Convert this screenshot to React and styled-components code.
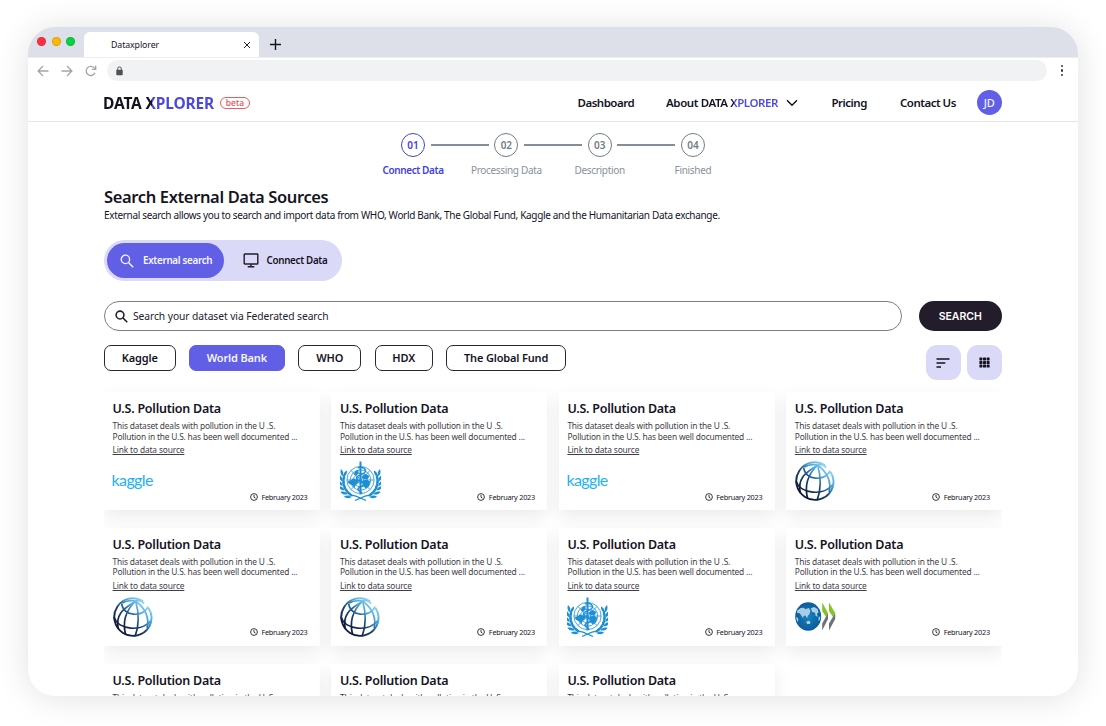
import React from 'react';
import styled, { createGlobalStyle, css } from 'styled-components';

const GlobalStyle = createGlobalStyle`
  * { box-sizing: border-box; }
  body {
    margin: 0;
    background: #fff;
    color: #15131f;
    font-family: "Noto Sans", "Open Sans", sans-serif;
    overflow: hidden;
  }
  button { font-family: inherit; margin: 0; padding: 0; border: 0; background: none; color: inherit; }
  svg { display: block; flex: none; }
`;

const Page = styled.div`
  height: 726px;
  padding: 27px 28px 30px;
`;

const Window = styled.div`
  display: flex;
  flex-direction: column;
  height: 669px;
  border-radius: 27px;
  overflow: hidden;
  background: #fff;
  box-shadow: 0 2px 34px rgba(0, 0, 0, 0.12);
`;

const TabBar = styled.div`
  display: flex;
  height: 30px;
  flex: none;
  padding: 5px 0 0 9px;
  background: #dde0e8;
`;

const Lights = styled.div`
  display: flex;
  gap: 5.6px;
  width: 47px;
  padding-top: 5px;
`;

const Light = styled.span`
  width: 9px;
  height: 9px;
  border-radius: 50%;
  background: ${(p) => p.$color};
  border: 0.5px solid rgba(0, 0, 0, 0.12);
`;

const Tab = styled.div`
  display: flex;
  align-items: center;
  justify-content: space-between;
  width: 175px;
  height: 25px;
  padding: 0 8px 0 27px;
  border-radius: 6px 6px 0 0;
  background: #fff;
  font-size: 8.8px;
  letter-spacing: -0.1px;
`;

const NewTab = styled.div`
  padding: 7px 0 0 11px;
`;

const AddressRow = styled.div`
  display: flex;
  align-items: center;
  height: 28px;
  flex: none;
  padding: 0 12.5px 2px 8.5px;
  color: #a4a5a9;
  border-top: 1px solid #eceef3;
`;

const NavIcons = styled.div`
  display: flex;
  gap: 12px;
  width: 70.5px;
`;

const Address = styled.div`
  display: flex;
  align-items: center;
  width: 940px;
  height: 21px;
  padding-left: 8px;
  border-radius: 11px;
  background: #f1f2f4;
`;

const Dots = styled.div`
  display: flex;
  flex-direction: column;
  gap: 2px;
  margin-left: 13.5px;
  span { width: 2.2px; height: 2.2px; border-radius: 50%; background: #35353b; }
`;

const Header = styled.header`
  display: flex;
  align-items: center;
  height: 37px;
  flex: none;
  padding: 0 76px 1px 75px;
  border-bottom: 1px solid #e4e4f2;
`;

const Brand = styled.span`
  color: transparent;
  background: linear-gradient(90deg, #15131f ${(p) => p.$split}px, #4b48e0 ${(p) => p.$split}px);
  -webkit-background-clip: text;
  background-clip: text;
`;

const Logo = styled.div`
  width: 117px;
  font-size: 15.5px;
  font-weight: 700;
  line-height: 20px;
  letter-spacing: -0.15px;
  white-space: nowrap;
`;

const Beta = styled.span`
  width: 30px;
  height: 12px;
  border: 1px solid #ee5a5f;
  border-radius: 6px;
  color: #ee4a50;
  font-size: 8.5px;
  font-weight: 500;
  line-height: 9px;
  letter-spacing: 0.1px;
  text-align: center;
`;

const Menu = styled.nav`
  display: flex;
  align-items: center;
  margin-left: auto;
  font-size: 11.5px;
  font-weight: 600;
  letter-spacing: -0.5px;
  white-space: nowrap;
`;

const MenuItem = styled.span`
  display: flex;
  align-items: center;
  width: ${(p) => p.$width}px;
  letter-spacing: ${(p) => (p.$wide ? -0.4 : -0.5)}px;
  svg { margin-left: 7.5px; }
`;

const Avatar = styled.span`
  width: 25.5px;
  height: 25.5px;
  border-radius: 50%;
  background: #605fe6;
  color: #f4f4ff;
  font-size: 11px;
  font-weight: 500;
  line-height: 25.5px;
  letter-spacing: 0;
  text-align: center;
`;

const Content = styled.main`
  display: flex;
  flex-direction: column;
  flex: 1;
  min-height: 0;
  padding: 0 76px;
`;

const Stepper = styled.ol`
  display: flex;
  justify-content: center;
  margin: 11px 0 0;
  padding: 0;
  list-style: none;
`;

const Step = styled.li`
  display: flex;
  flex-direction: column;
  align-items: center;
  width: 93.3px;
  color: ${(p) => (p.$active ? '#4340e0' : '#89919a')};
  font-size: 10px;
  font-weight: ${(p) => (p.$active ? 600 : 400)};
  line-height: 14px;
  letter-spacing: ${(p) => (p.$active ? -0.4 : -0.32)}px;
  white-space: nowrap;
`;

const StepTrack = styled.div`
  display: flex;
  align-items: center;
  align-self: stretch;
  margin-bottom: 6px;
`;

const StepLine = styled.span`
  flex: 1;
  height: 1.5px;
  background: ${(p) => (p.$hidden ? 'transparent' : '#858d97')};
  &:first-child { margin-right: 5.5px; }
  &:last-child { margin-left: 5.5px; }
`;

const StepNumber = styled.span`
  width: 24px;
  height: 24px;
  border: 1.5px solid ${(p) => (p.$active ? '#4340e0' : '#737c87')};
  border-radius: 50%;
  color: ${(p) => (p.$active ? '#4340e0' : '#737c87')};
  font-size: 10px;
  font-weight: 600;
  line-height: 22px;
  letter-spacing: 0;
  text-align: center;
`;

const Title = styled.h1`
  margin: 10px 0 0;
  font-size: 16.5px;
  font-weight: 600;
  line-height: 20px;
  letter-spacing: -0.36px;
`;

const Subtitle = styled.p`
  margin: 0;
  font-size: 10px;
  line-height: 16px;
  letter-spacing: -0.335px;
  white-space: nowrap;
`;

const Toggle = styled.div`
  display: flex;
  width: 238px;
  height: 41px;
  margin-top: 17px;
  padding: 3px;
  border-radius: 21px;
  background: #dbd9f8;
`;

const ToggleItem = styled.button`
  display: flex;
  align-items: center;
  gap: ${(p) => (p.$active ? 9 : 8)}px;
  width: ${(p) => (p.$active ? 117 : 115)}px;
  height: 35px;
  padding-left: ${(p) => (p.$active ? 13 : 18.5)}px;
  border-radius: 18px;
  font-size: 9.8px;
  font-weight: 600;
  letter-spacing: -0.3px;
  white-space: nowrap;
  span { padding-bottom: 1px; }
  ${(p) => p.$active && css`background: #605fe6; color: #f6f6ff;`}
`;

const SearchRow = styled.div`
  display: flex;
  gap: 17px;
  margin-top: 20px;
`;

const SearchField = styled.div`
  display: flex;
  align-items: center;
  gap: 5px;
  width: 798px;
  height: 30px;
  padding-left: 10px;
  border: 1px solid #7d7d82;
  border-radius: 15px;
  color: #24222e;
  font-size: 10.3px;
  letter-spacing: -0.08px;
`;

const SearchButton = styled.button`
  width: 82.5px;
  height: 30px;
  border-radius: 15px;
  background: #231c2b;
  color: #fff;
  font: 600 10.5px Inter, sans-serif;
`;

const FilterRow = styled.div`
  display: flex;
  gap: 13.4px;
  margin-top: 14px;
`;

const Chip = styled.button`
  width: ${(p) => p.$width}px;
  height: 26px;
  padding-bottom: 1.5px;
  border: 1.2px solid ${(p) => (p.$active ? '#605fe6' : '#2b2836')};
  border-radius: 7px;
  background: ${(p) => (p.$active ? '#605fe6' : '#fff')};
  color: ${(p) => (p.$active ? '#f6f6ff' : '#15131f')};
  font-size: 11px;
  font-weight: 600;
  letter-spacing: -0.16px;
`;

const ViewButtons = styled.div`
  display: flex;
  gap: 6px;
  margin: 0 0.5px 0 auto;
`;

const ViewButton = styled.button`
  display: grid;
  place-items: center;
  width: 35px;
  height: 35px;
  border-radius: 11px;
  background: #dbd9f8;
`;

const CardGrid = styled.div`
  display: grid;
  grid-template-columns: repeat(4, 216px);
  grid-auto-rows: 118px;
  gap: 17.8px 11.45px;
  flex: 1;
  min-height: 0;
  overflow: hidden;
  padding-top: 12px;
`;

const Card = styled.article`
  display: flex;
  flex-direction: column;
  padding: 7px 12.5px 0 8.5px;
  background: #fff;
  box-shadow: 0 7px 17px rgba(0, 0, 0, 0.08);
`;

const CardTitle = styled.h2`
  margin: 0;
  font-size: 12.5px;
  font-weight: 600;
  line-height: 20px;
  letter-spacing: -0.24px;
`;

const CardText = styled.p`
  margin: 2px 0 0;
  color: #3f3e49;
  font-size: 8.4px;
  line-height: 10.5px;
  letter-spacing: -0.18px;
  white-space: nowrap;
`;

const CardLink = styled.a`
  margin-top: 2px;
  color: #3f3e49;
  font-size: 8.4px;
  line-height: 12px;
  letter-spacing: -0.15px;
  text-decoration: underline;
`;

const CardFooter = styled.div`
  display: flex;
  justify-content: space-between;
  margin-top: 4px;
`;

const LogoSlot = styled.div`
  display: flex;
  align-items: center;
  height: 43px;
`;

const KaggleText = styled.span`
  margin-left: -1px;
  padding-bottom: 5px;
  color: #20b2f5;
  font: 400 16px Lato, sans-serif;
  letter-spacing: -0.6px;
`;

const CardDate = styled.span`
  display: flex;
  align-items: center;
  gap: 3.5px;
  height: 10px;
  margin-top: 31.5px;
  font-size: 7.3px;
  letter-spacing: -0.25px;
  white-space: nowrap;
`;

const SearchIcon = ({ size, stroke }) => (
  <svg width={size} height={size} viewBox="0 0 14 14" fill="none" stroke="currentColor" strokeWidth={stroke}>
    <circle cx="5.4" cy="5.4" r="4.2" />
    <path d="M8.5 8.5l4.7 4.7" />
  </svg>
);

const BackIcon = () => (
  <svg width="12" height="12" viewBox="0 0 12 12" fill="none" stroke="currentColor" strokeWidth="1.3">
    <path d="M11.5 6H1.2M6 1L1.1 6L6 11" />
  </svg>
);

const ForwardIcon = () => (
  <svg width="12" height="12" viewBox="0 0 12 12" fill="none" stroke="currentColor" strokeWidth="1.3">
    <path d="M.5 6h10.3M6 1l4.9 5L6 11" />
  </svg>
);

const ReloadIcon = () => (
  <svg width="12" height="12" viewBox="0 0 12 12" fill="none" stroke="currentColor" strokeWidth="1.3">
    <path d="M10 7.8A4.6 4.6 0 1 1 9.3 2.9L10.4 4" />
    <path d="M10.7 .6v3.8H6.8" />
  </svg>
);

const LockIcon = () => (
  <svg width="9" height="10" viewBox="0 0 9 10">
    <rect x="1.3" y="3.7" width="6.4" height="5.6" rx=".8" fill="#505156" />
    <path d="M2.7 4V2.7a1.8 1.8 0 0 1 3.6 0V4" fill="none" stroke="#505156" strokeWidth="1" />
  </svg>
);

const MonitorIcon = () => (
  <svg width="16" height="15" viewBox="0 0 16 15" fill="none" stroke="#231c2b" strokeWidth="1.4">
    <rect x="1.2" y="1" width="13.6" height="10" rx=".6" />
    <path d="M8 11v2.8M4.7 13.8h6.6" />
  </svg>
);

const ClockIcon = () => (
  <svg width="8" height="8" viewBox="0 0 8 8" fill="none" stroke="#24222e" strokeWidth=".9">
    <circle cx="4" cy="4" r="3.4" />
    <path d="M4 1.9V4.2L5.5 5.2" />
  </svg>
);

const WorldBankLogo = () => (
  <svg width="41" height="41" viewBox="0.8 0 41 41" fill="none" stroke="url(#wb)" strokeWidth="1.7">
    <defs>
      <linearGradient id="wb" gradientUnits="userSpaceOnUse" x1="10" y1="32" x2="33" y2="7">
        <stop offset="0" stopColor="#101a3c" />
        <stop offset=".4" stopColor="#1c4670" />
        <stop offset=".72" stopColor="#48a6db" />
        <stop offset="1" stopColor="#8fd0f3" />
      </linearGradient>
    </defs>
    <path d="M31 4.2A18.8 18.8 0 1 0 36.8 30" strokeWidth="1.9" />
    <path d="M36.4 11A18.8 18.8 0 0 1 36.8 30" strokeWidth="2" />
    <path d="M23.5 4C16 10 2.5 14 6 32" />
    <path d="M23.5 4C15 12 9.5 23 13.5 38" />
    <path d="M23.5 4C26 13 27.5 27 23 39" />
    <path d="M23.5 4C30 9 38 17 35 31" />
    <path d="M23.5 4C18 3 13 4 10 6M23.5 4C26 3 29.5 3.8 32 6.5" />
    <path d="M9.5 6.5C10.5 19.5 31 21 36 9.5" />
    <path d="M1.8 20C6 33.5 30 35 38.6 23.5" />
  </svg>
);

const leafAngles = [0, 1, 2, 3, 4, 5];

const WhoLeaves = () =>
  leafAngles.map((i) => (
    <g key={i} transform={`rotate(${-i * 15} 20.5 20)`}>
      <path d="M2.6 15.5C.4 13.5 0 10.4 1 8C3.4 10 3.9 13 2.6 15.5z" />
      <path d="M3.2 16.3C2.9 13 4.6 10.6 7 9.6C7.4 12.4 5.9 15.2 3.2 16.3z" />
    </g>
  ));

const WhoLogo = () => (
  <svg width="41" height="41" viewBox="0 0 41 41" fill="none" stroke="#1d8fd3">
    <g strokeWidth=".8">
      <circle cx="20.5" cy="19" r="13.6" />
      <circle cx="20.5" cy="19" r="10.2" />
      <circle cx="20.5" cy="19" r="6.8" />
      <circle cx="20.5" cy="19" r="3.3" />
      <path d="M7 19h27M11 9.5l19 19M30 9.5l-19 19" />
    </g>
    <g fill="#1d8fd3" stroke="none">
      <path d="M7.5 20.5l4-1.5 1.5-2 2.5 1.6 3 .4-1 3.4-2 1.1-.7 3.4-2.6-2.6-3.2-1.6z" />
      <path d="M22 15l3.5-2 3.7 1.8-1 3-3.1.4-2.7-1z" />
      <path d="M22.5 19.7l4-1.2 3.7 2-1.3 4.8-3.4 2.2-2.6-2.9z" />
      <path d="M14.8 10.5l3.4-1.8.5 3-2.2 2.9-2.6-.7z" />
    </g>
    <path d="M20.5 .5v33" strokeWidth="2" />
    <path d="M18 7C21.5 4.8 27.5 8 24.8 11.4C22.5 14 16.2 13.8 16.5 17.4C16.8 20.7 24.2 20 23.6 23.4C23.2 26 17.8 25.6 18 28.5C18.2 30.7 22.4 30.4 21.7 33" strokeWidth="1.5" />
    <path d="M4 14C1 24 6 34 16 35.2L26 39.5M37 14C40 24 35 34 25 35.2L15 39.5" strokeWidth="1.3" />
    <g fill="#1d8fd3" stroke="none">
      <WhoLeaves />
      <g transform="translate(41 0) scale(-1 1)">
        <WhoLeaves />
      </g>
    </g>
  </svg>
);

const OecdLogo = () => (
  <svg width="41" height="30" viewBox="0 0.5 41 30">
    <defs>
      <radialGradient id="oecd" cx=".5" cy=".5" r=".55">
        <stop offset="0" stopColor="#1683c2" />
        <stop offset="1" stopColor="#0a5894" />
      </radialGradient>
    </defs>
    <ellipse cx="13.2" cy="15" rx="13" ry="14.3" fill="url(#oecd)" />
    <g fill="#a9cde2">
      <path d="M2.2 9L5.8 6.4l3-.2 1.4 1.6L14 6.6l1.4 3-1 3.2-1.6 1.4-.6 2.6-1.8-2.8-1.8.4-.6 2.2-1.8-2.6-1.4-2.2-2.6-.4z" />
      <path d="M15.8 6.8l3.4-1.2 3.4 1.8 1 3.6-1.6 1 .6 3.4-2-1.2-.6-3-2.8-.6z" />
      <path d="M11.2 20.4l2.1-1.4 2.3 1.6-.8 1.8-2.6.2z" />
      <path d="M1 15.4l2 1 .4 2.8-1.2 1z" />
      <path d="M23.6 15.5l1.7-.5-.5 3.6-1.4.6z" />
    </g>
    <path d="M27.2 1L33 11.5L31 15.5L27.2 9.5zM34 1L40.2 11.5L38 15.5L34 9.5z" fill="#82c526" />
    <path d="M27.2 29V22L33 11.5V17.5zM34 29V22L40.2 11.5V17.5z" fill="#6e7276" />
  </svg>
);

const logos = {
  kaggle: () => <KaggleText>kaggle</KaggleText>,
  who: WhoLogo,
  bank: WorldBankLogo,
  oecd: OecdLogo,
};

const cards = ['kaggle', 'who', 'kaggle', 'bank', 'bank', 'bank', 'who', 'oecd', 'kaggle', 'who', 'bank'];

const steps = ['Connect Data', 'Processing Data', 'Description', 'Finished'];

const filters = [
  { label: 'Kaggle', width: 71.5 },
  { label: 'World Bank', width: 96, active: true },
  { label: 'WHO', width: 63 },
  { label: 'HDX', width: 58 },
  { label: 'The Global Fund', width: 120 },
];

const DatasetCard = ({ source }) => {
  const SourceLogo = logos[source];
  return (
    <Card>
      <CardTitle>U.S. Pollution Data</CardTitle>
      <CardText>
        This dataset deals with pollution in the U .S.
        <br />
        Pollution in the U.S. has been well documented ...
      </CardText>
      <CardLink>Link to data source</CardLink>
      <CardFooter>
        <LogoSlot>
          <SourceLogo />
        </LogoSlot>
        <CardDate>
          <ClockIcon />
          February 2023
        </CardDate>
      </CardFooter>
    </Card>
  );
};

export default function App() {
  return (
    <Page>
      <GlobalStyle />
      <Window>
        <TabBar>
          <Lights>
            <Light $color="#fb3044" />
            <Light $color="#fdb803" />
            <Light $color="#02d33f" />
          </Lights>
          <Tab>
            Dataxplorer
            <svg width="8" height="8" viewBox="0 0 8 8" stroke="#222" strokeWidth="1">
              <path d="M1 1l6 6M7 1L1 7" />
            </svg>
          </Tab>
          <NewTab>
            <svg width="11" height="11" viewBox="0 0 11 11" stroke="#15131f" strokeWidth="1.4">
              <path d="M5.5 0v11M0 5.5h11" />
            </svg>
          </NewTab>
        </TabBar>
        <AddressRow>
          <NavIcons>
            <BackIcon />
            <ForwardIcon />
            <ReloadIcon />
          </NavIcons>
          <Address>
            <LockIcon />
          </Address>
          <Dots>
            <span />
            <span />
            <span />
          </Dots>
        </AddressRow>
        <Header>
          <Logo>
            <Brand $split={49}>DATA XPLORER</Brand>
          </Logo>
          <Beta>beta</Beta>
          <Menu>
            <MenuItem $width={88.5}>Dashboard</MenuItem>
            <MenuItem $width={165.5} $wide>
              About&nbsp;<Brand $split={33}>DATA XPLORER</Brand>
              <svg width="12" height="8" viewBox="0 0 12 8" fill="none" stroke="#15131f" strokeWidth="1.4">
                <path d="M1 1.3l5 5 5-5" />
              </svg>
            </MenuItem>
            <MenuItem $width={68.5}>Pricing</MenuItem>
            <MenuItem $width={76.5}>Contact Us</MenuItem>
            <Avatar>JD</Avatar>
          </Menu>
        </Header>
        <Content>
          <Stepper>
            {steps.map((label, i) => (
              <Step key={label} $active={i === 0}>
                <StepTrack>
                  <StepLine $hidden={i === 0} />
                  <StepNumber $active={i === 0}>0{i + 1}</StepNumber>
                  <StepLine $hidden={i === steps.length - 1} />
                </StepTrack>
                {label}
              </Step>
            ))}
          </Stepper>
          <Title>Search External Data Sources</Title>
          <Subtitle>
            External search allows you to search and import data from WHO, World Bank, The Global Fund, Kaggle and the
            Humanitarian Data exchange.
          </Subtitle>
          <Toggle>
            <ToggleItem $active>
              <SearchIcon size={14} stroke={1.3} />
              <span>External search</span>
            </ToggleItem>
            <ToggleItem>
              <MonitorIcon />
              <span>Connect Data</span>
            </ToggleItem>
          </Toggle>
          <SearchRow>
            <SearchField>
              <SearchIcon size={13} stroke={1.7} />
              Search your dataset via Federated search
            </SearchField>
            <SearchButton>SEARCH</SearchButton>
          </SearchRow>
          <FilterRow>
            {filters.map((f) => (
              <Chip key={f.label} $width={f.width} $active={f.active}>
                {f.label}
              </Chip>
            ))}
            <ViewButtons>
              <ViewButton>
                <svg width="14" height="10" viewBox="0 0 14 10" stroke="#15131f" strokeWidth="1.3">
                  <path d="M.5 1h13M.5 5h8.8M.5 9h4.5" />
                </svg>
              </ViewButton>
              <ViewButton>
                <svg width="11" height="11" viewBox="0 0 11 11" fill="#15131f">
                  {[0, 1, 2].map((r) =>
                    [0, 1, 2].map((c) => (
                      <rect key={`${r}${c}`} x={0.4 + c * 3.6} y={0.4 + r * 3.6} width="3" height="3" rx=".6" />
                    ))
                  )}
                </svg>
              </ViewButton>
            </ViewButtons>
          </FilterRow>
          <CardGrid>
            {cards.map((source, i) => (
              <DatasetCard key={i} source={source} />
            ))}
          </CardGrid>
        </Content>
      </Window>
    </Page>
  );
}
